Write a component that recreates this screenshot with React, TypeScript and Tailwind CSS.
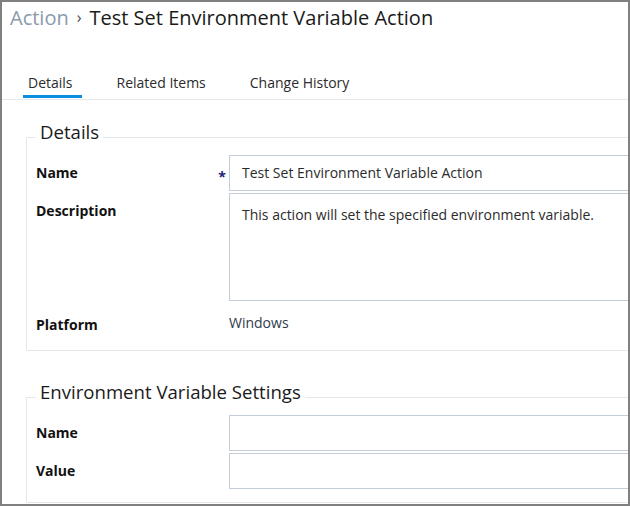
import React from "react";

const font = { fontFamily: '"Open Sans", "Noto Sans", sans-serif' };

function Label({ children }: { children: React.ReactNode }) {
  return <span className="text-[14px] leading-[19px] font-bold text-[#111111]">{children}</span>;
}

export default function App() {
  return (
    <div
      className="w-[630px] h-[506px] border-2 border-[#808080] bg-white overflow-hidden font-['Open_Sans',sans-serif]"
      style={font}
    >
      {/* Title */}
      <div className="pl-[8px] pt-[2px] text-[20px] leading-[27px] whitespace-nowrap flex items-center">
        <span className="text-[#8a9aaa]">Action</span>
        <span className="mx-[8px] text-[16px] text-[#444444]">›</span>
        <span className="text-[#1a1a1a]">Test Set Environment Variable Action</span>
      </div>

      {/* Tabs */}
      <div className="mt-[42px] border-b border-[#e6e9ec] pb-[1px] pl-[26px] flex gap-[44px] text-[14px] leading-[19px] text-[#2b2b2b]">
        <div className="relative flex flex-col">
          <span>Details</span>
          <div className="mt-[3px] h-[3px] -ml-[5px] -mr-[9px] bg-[#0a8ee0]" />
        </div>
        <div className="flex flex-col">
          <span>Related Items</span>
          <div className="mt-[3px] h-[3px]" />
        </div>
        <div className="flex flex-col">
          <span>Change History</span>
          <div className="mt-[3px] h-[3px]" />
        </div>
      </div>

      {/* Content */}
      <div className="ml-[24px] mt-[20px] w-[800px]">
        <fieldset className="border border-[#e3e8ed] pl-[9px] pt-0 pb-0">
          <legend className="px-[4px] text-[18.6px] leading-[24px] pb-[11px] text-[#1a1a1a]">Details</legend>

          <div className="flex items-center">
            <div className="w-[193px] flex items-center justify-between pr-[3px] pb-[2px]">
              <Label>Name</Label>
              <span className="mt-[9px] text-[14px] leading-[19px] font-bold text-[#1c1c7a]">*</span>
            </div>
            <div className="flex-1 h-[36px] border border-[#c4ced8] px-[12px] pb-[2px] flex items-center text-[14px] leading-[19px] text-[#2b2b2b]">
              Test Set Environment Variable Action
            </div>
          </div>

          <div className="flex items-start mt-[2px]">
            <div className="w-[193px] pt-[5px]">
              <Label>Description</Label>
            </div>
            <div className="flex-1 h-[108px] border border-[#c4ced8] px-[12px] pt-[11px] text-[14px] leading-[19px] text-[#2b2b2b]">
              This action will set the specified environment variable.
            </div>
          </div>

          <div className="flex items-start pt-[12px] pb-[16px]">
            <div className="w-[193px] mt-[2px] leading-[19px]">
              <Label>Platform</Label>
            </div>
            <span className="text-[14px] leading-[19px] text-[#2f3a4c]">Windows</span>
          </div>
        </fieldset>

        <fieldset className="mt-[29px] border border-[#e3e8ed] pl-[9px] pt-0 pb-[13px]">
          <legend className="px-[4px] text-[18.6px] leading-[24px] pb-[11px] text-[#1a1a1a]">
            Environment Variable Settings
          </legend>

          <div className="flex items-center">
            <div className="w-[193px] pb-[2px]">
              <Label>Name</Label>
            </div>
            <div className="flex-1 h-[36px] border border-[#c4ced8]" />
          </div>

          <div className="flex items-center mt-[2px]">
            <div className="w-[193px] pb-[2px]">
              <Label>Value</Label>
            </div>
            <div className="flex-1 h-[36px] border border-[#c4ced8]" />
          </div>
        </fieldset>
      </div>
    </div>
  );
}
